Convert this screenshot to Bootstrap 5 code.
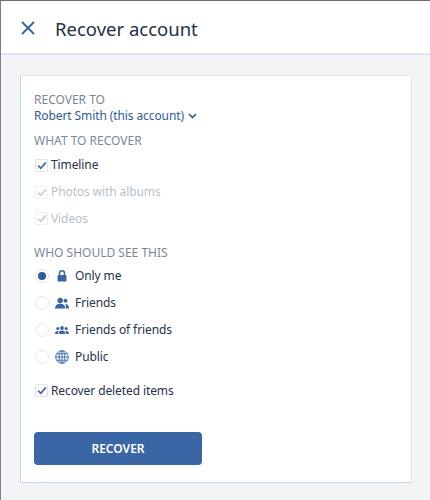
<!DOCTYPE html>
<html lang="en">
<head>
<meta charset="utf-8">
<title>Recover account</title>
<link href="https://cdn.jsdelivr.net/npm/bootstrap@5.3.0/dist/css/bootstrap.min.css" rel="stylesheet">
<style>
html,body{height:100%}
body{background:#f3f4f6;font-family:"Noto Sans","Open Sans",sans-serif;font-size:12px;letter-spacing:-.1px;color:#26334a;overflow:hidden;border-top:1px solid #6f6f6a;border-left:1px solid #77808f}
.top-bar{height:54px;background:#fff;border-bottom:2px solid #e0e7f1;padding:2px 0 0 19px;gap:19px}
.top-bar h1{font-size:18.5px;font-weight:400;line-height:27px;margin:0;color:#24303f;letter-spacing:0}
.top-x{width:16px;height:16px;display:block}
.panel{margin:20px 18px 0 19px;height:408px;background:#fff;border:1px solid #c5d8ea;border-top-color:#dfe7f1;border-right-color:#dfe7f1;padding:16px 13px 0 13px}
.sect{font-size:12px;letter-spacing:0;line-height:16px;color:#7d8798}
.who{color:#2f5c9b;line-height:16px;gap:4px}
.who svg{width:9px;height:6px}
.gap-what{margin-top:9px;margin-bottom:3px}
.gap-who{margin-top:12.5px;margin-bottom:1.75px}
.tick-row{height:26.75px;gap:3px;color:#26334a}
.tick{width:13px;height:13px;margin-left:1px;border:1px solid #dfe5ef;background:#fff;border-radius:1px;flex:none;display:flex;align-items:center;justify-content:center}
.tick svg{width:10px;height:9px}
.off{color:#b9bfc9}
.off .tick{border-color:#eef0f4}
.rad-row{height:27px;color:#26334a}
.rad{width:14px;height:14px;border:1.5px solid #e3e8f1;border-radius:50%;flex:none;display:flex;align-items:center;justify-content:center;margin:0 6px 0 1px}
.rad i{width:8px;height:8px;border-radius:50%;background:#2f5c9b;display:block}
.aud{width:14px;height:14px;flex:none;margin-right:6px;display:block}
.gap-del{margin-top:7px}
.recover-btn{width:168px;height:33px;background:#3a66a5;border:0;border-radius:4px;color:#fff;font-size:12px;font-weight:600;margin-top:28px;letter-spacing:0}
.recover-btn:hover{background:#3a66a5;color:#fff}
</style>
</head>
<body>
<header class="top-bar d-flex align-items-center">
  <svg class="top-x" viewBox="0 0 16 16"><path d="M2 2 14 14M14 2 2 14" stroke="#3a66a5" stroke-width="2" fill="none"/></svg>
  <h1>Recover account</h1>
</header>
<main class="panel">
  <div class="sect">RECOVER TO</div>
  <div class="who d-flex align-items-center">Robert Smith (this account)
    <svg viewBox="0 0 9 6"><path d="M1 1 4.5 4.5 8 1" stroke="#2f5c9b" stroke-width="1.6" fill="none"/></svg>
  </div>
  <div class="sect gap-what">WHAT TO RECOVER</div>
  <div class="tick-row d-flex align-items-center">
    <span class="tick"><svg viewBox="0 0 9 8"><path d="M1 4.2 3.4 6.5 8 1.2" stroke="#3a66a5" stroke-width="1.5" fill="none"/></svg></span>Timeline
  </div>
  <div class="tick-row off d-flex align-items-center">
    <span class="tick"><svg viewBox="0 0 9 8"><path d="M1 4.2 3.4 6.5 8 1.2" stroke="#c4cfdf" stroke-width="1.5" fill="none"/></svg></span>Photos with albums
  </div>
  <div class="tick-row off d-flex align-items-center">
    <span class="tick"><svg viewBox="0 0 9 8"><path d="M1 4.2 3.4 6.5 8 1.2" stroke="#c4cfdf" stroke-width="1.5" fill="none"/></svg></span>Videos
  </div>
  <div class="sect gap-who">WHO SHOULD SEE THIS</div>
  <div class="rad-row d-flex align-items-center">
    <span class="rad"><i></i></span>
    <svg class="aud" viewBox="0 0 14 14"><path d="M4.5 6V4.200a2.500 2.500 0 0 1 5 0V6" stroke="#3a66a5" stroke-width="1.500" fill="none"/><rect x="2.500" y="6" width="9" height="6.500" rx="1" fill="#3a66a5"/></svg>Only me
  </div>
  <div class="rad-row d-flex align-items-center">
    <span class="rad"></span>
    <svg class="aud" viewBox="0 0 14 14"><circle cx="5.200" cy="4.500" r="2.700" fill="#3a66a5"/><path d="M0 12.500c0-3 2-4.700 5.200-4.700s5.200 1.700 5.200 4.700z" fill="#3a66a5"/><circle cx="10.500" cy="4.800" r="2" fill="#3a66a5"/><path d="M11 12.500h3c0-2.800-1.300-4.300-3.800-4.400 .6 1.200.9 2.600.8 4.400z" fill="#3a66a5"/></svg>Friends
  </div>
  <div class="rad-row d-flex align-items-center">
    <span class="rad"></span>
    <svg class="aud" viewBox="0 0 14 14"><circle cx="7" cy="5" r="1.900" fill="#3a66a5"/><circle cx="2.800" cy="5.500" r="1.600" fill="#3a66a5"/><circle cx="11.200" cy="5.500" r="1.600" fill="#3a66a5"/><path d="M3.800 11c0-2.400 1.200-3.500 3.200-3.500s3.200 1.100 3.200 3.500z" fill="#3a66a5"/><path d="M0 11c0-2 1-3 2.800-3 .5 0 .8.100 1.100.2C3.200 8.900 3 9.900 3 11zM14 11c0-2-1-3-2.800-3-.5 0-.8.100-1.100.2.700.7.900 1.700.9 2.800z" fill="#3a66a5"/></svg>Friends of friends
  </div>
  <div class="rad-row d-flex align-items-center">
    <span class="rad"></span>
    <svg class="aud" viewBox="0 0 14 14" fill="none" stroke="#3a66a5" stroke-width=".9"><circle cx="7" cy="7" r="6.300"/><ellipse cx="7" cy="7" rx="2.900" ry="6.300"/><path d="M7 .7v12.600M.7 7h12.600M1.500 3.800h11M1.500 10.200h11"/></svg>Public
  </div>
  <div class="tick-row gap-del d-flex align-items-center">
    <span class="tick"><svg viewBox="0 0 9 8"><path d="M1 4.200 3.400 6.500 8 1.200" stroke="#3a66a5" stroke-width="1.500" fill="none"/></svg></span>Recover deleted items
  </div>
  <button type="button" class="btn recover-btn d-block">RECOVER</button>
</main>
</body>
</html>
